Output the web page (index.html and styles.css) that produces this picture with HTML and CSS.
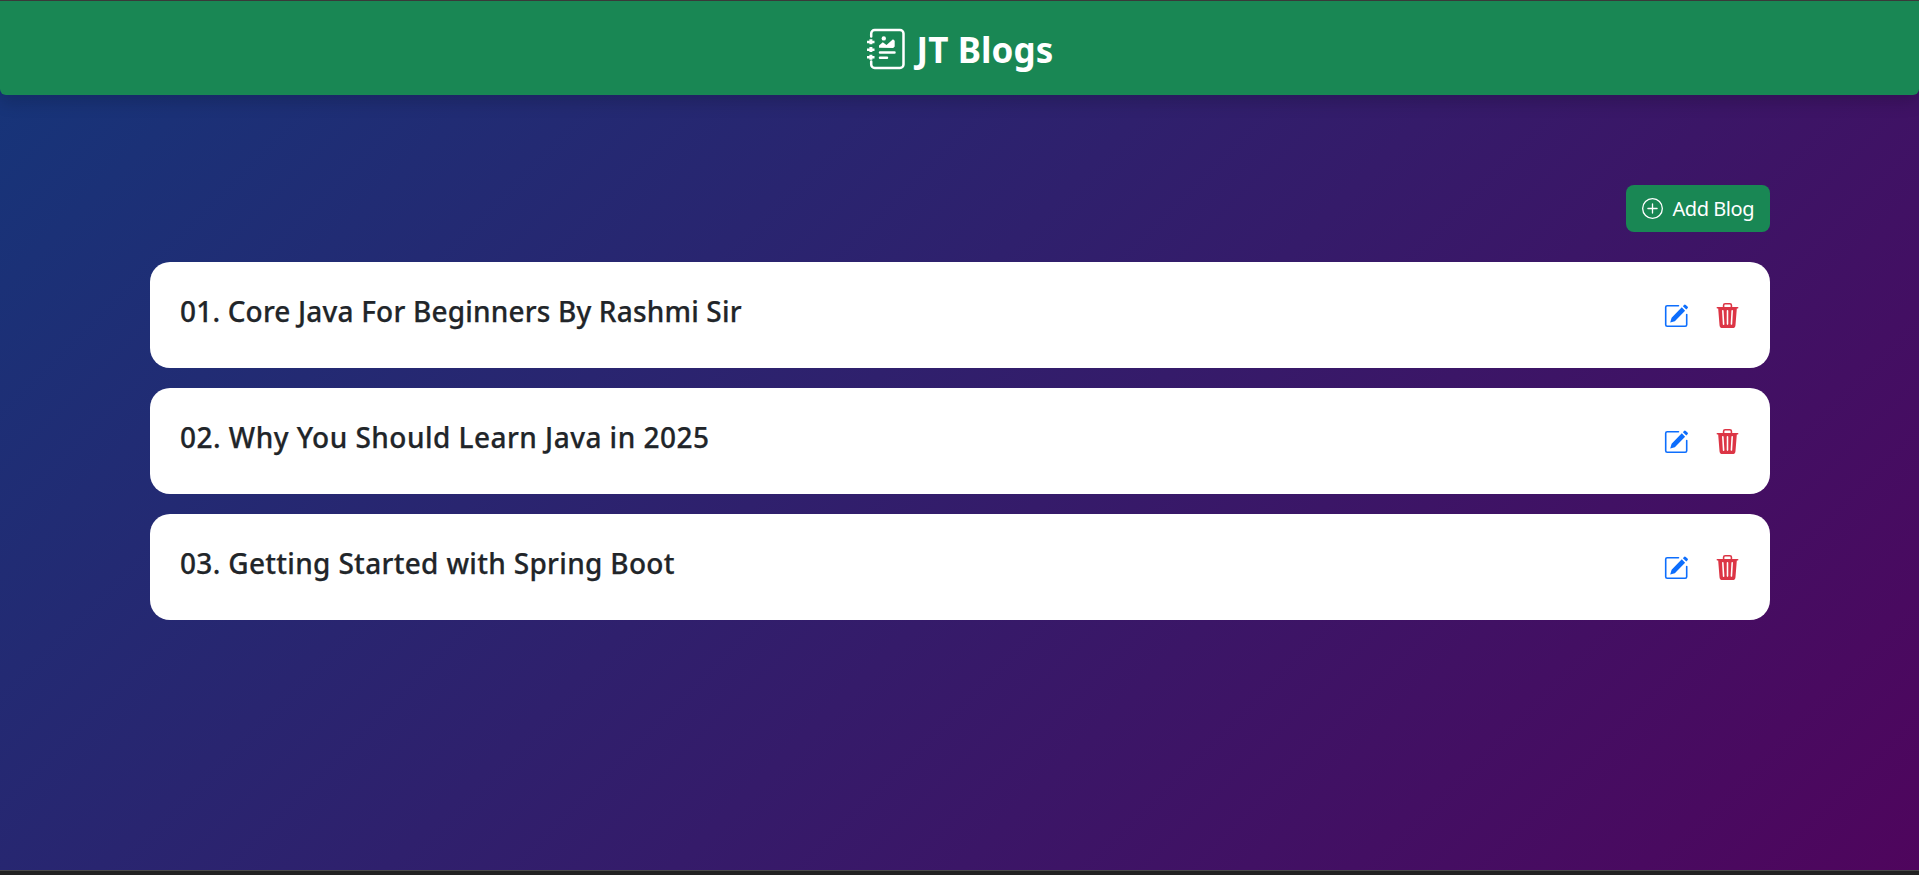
FILE: index.html
```
<!DOCTYPE html>
<html lang="en">
<head>
<meta charset="utf-8">
<title>JT Blogs</title>
<link rel="stylesheet" href="styles.css">
</head>
<body>
<svg class="sprite" aria-hidden="true">
  <symbol id="edit" viewBox="0 0 24 24">
    <path d="M14.500 1.700H3.200a1.500 1.500 0 0 0-1.500 1.500V20.800a1.500 1.500 0 0 0 1.500 1.500h18a1.500 1.500 0 0 0 1.500-1.500V10.500" fill="none" stroke="currentColor" stroke-width="1.600" stroke-linecap="round"/>
    <path d="M17.800 3.200l3.300 3.500L10.800 17.200 6.200 18.600l1.400-4.800zM18.900 2.200l1.100-1.300a1.300 1.300 0 0 1 1.800 0l1.700 1.600a1.300 1.300 0 0 1 0 1.800L22.300 5.600z" fill="currentColor"/>
  </symbol>
  <symbol id="trash" viewBox="0 0 16 16">
    <path fill="currentColor" d="M11 1.500v1h3.500a.5.5 0 0 1 0 1h-.538l-.853 10.660A2 2 0 0 1 11.115 16h-6.230a2 2 0 0 1-1.994-1.840L2.038 3.500H1.500a.5.5 0 0 1 0-1H5v-1A1.500 1.500 0 0 1 6.500 0h3A1.500 1.500 0 0 1 11 1.500m-5 0v1h4v-1a.5.5 0 0 0-.5-.5h-3a.5.5 0 0 0-.5.5M4.500 5.029l.5 8.500a.5.5 0 1 0 .998-.06l-.5-8.500a.5.5 0 1 0-.998.06m6.530-.528a.5.5 0 0 0-.528.47l-.5 8.500a.5.5 0 0 0 .998.058l.5-8.500a.5.5 0 0 0-.47-.528M8 4.500a.5.5 0 0 0-.5.5v8.500a.5.5 0 0 0 1 0V5a.5.5 0 0 0-.5-.5"/>
  </symbol>
</svg>
<div class="page">
  <header class="header">
    <svg class="logo" viewBox="0 0 40 42" fill="none" stroke="currentColor">
      <path d="M5.200 8.500V5.500a3.500 3.500 0 0 1 3.500-3.500h25.300a3.500 3.500 0 0 1 3.500 3.500v31a3.500 3.500 0 0 1-3.500 3.500H8.700a3.500 3.500 0 0 1-3.500-3.500v-3" stroke-width="2.500" stroke-linecap="round"/>
      <path d="M1 14h7.500M1 21.700h7.500M1 29.300h7.500" stroke-width="2.500"/>
      <path d="M4.900 11.300v5M4.900 19.100v5M4.900 26.700v5" stroke-width="3"/>
      <path d="M14 24.500h14.500M14 29.800h7" stroke-width="2.500" stroke-linecap="round"/>
      <circle cx="17.800" cy="10.400" r="2.200" fill="currentColor" stroke="none"/>
      <path d="M13 19.800v-2.300l3.800-3.300 3.700 2.700 6.500-5.600 1.700 1.400v5.700l-1.500 1.600z" fill="currentColor" stroke="none"/>
    </svg>
    <h1 class="brand">JT Blogs</h1>
  </header>
  <main class="content">
    <div class="toolbar">
      <button class="add">
        <svg class="add-icon" viewBox="0 0 16 16" fill="none" stroke="currentColor" stroke-linecap="round"><circle cx="8" cy="8" r="7.500"/><path d="M8 4.500v7M4.500 8h7"/></svg>
        <span class="add-label">Add Blog</span>
      </button>
    </div>
    <div class="list">
      <article class="card"><h3 class="title t1">01. Core Java For Beginners By Rashmi Sir</h3><div class="actions"><svg class="edit"><use href="#edit"/></svg><svg class="trash"><use href="#trash"/></svg></div></article>
      <article class="card"><h3 class="title t2">02. Why You Should Learn Java in 2025</h3><div class="actions"><svg class="edit"><use href="#edit"/></svg><svg class="trash"><use href="#trash"/></svg></div></article>
      <article class="card"><h3 class="title t3">03. Getting Started with Spring Boot</h3><div class="actions"><svg class="edit"><use href="#edit"/></svg><svg class="trash"><use href="#trash"/></svg></div></article>
    </div>
  </main>
  <div class="bottom-bar"></div>
</div>
</body>
</html>
```
FILE: styles.css
```
* { box-sizing: border-box; }
body {
  margin: 0;
  overflow: hidden;
  font-family: "Segoe UI", "Noto Sans", "Open Sans", sans-serif;
  color: #212529;
}
.sprite { display: none; }
.page {
  display: flex;
  flex-direction: column;
  height: 875px;
  border-top: 1px solid #3b3b3b;
  background: linear-gradient(135deg, #15367a, #4f055d);
}
.header {
  display: flex;
  align-items: center;
  justify-content: center;
  gap: 11px;
  height: 94px;
  flex: none;
  border-radius: 0 0 6px 6px;
  background: #198754;
  color: #fff;
  box-shadow: 0 8px 16px rgba(0, 0, 0, .15);
}
.logo { width: 40px; height: 42px; margin-top: 1px; }
.brand {
  margin: 0;
  padding-top: 4px;
  font-size: 35px;
  line-height: 48px;
  font-weight: 700;
  letter-spacing: .1px;
}
.content { flex: 1; padding: 90px 149px 0 150px; }
.toolbar { display: flex; justify-content: flex-end; }
.add {
  display: flex;
  align-items: center;
  gap: 10px;
  width: 144px;
  height: 47px;
  padding: 0 0 0 15.5px;
  border: 0;
  border-radius: 8px;
  background: #198754;
  color: #fff;
  font: 400 20px/28px "Segoe UI", "Noto Sans", sans-serif;
  letter-spacing: -.45px;
  white-space: nowrap;
}
.add-icon { width: 21px; height: 21px; flex: none; }
.list { display: flex; flex-direction: column; gap: 20px; margin-top: 30px; }
.card {
  display: flex;
  justify-content: space-between;
  align-items: flex-start;
  height: 106px;
  padding: 30px;
  border-radius: 20px;
  background: #fff;
}
.title {
  margin: 0;
  font-size: 28px;
  line-height: 38px;
  font-weight: 500;
  -webkit-text-stroke: .25px currentColor;
  white-space: nowrap;
}
.t1 { letter-spacing: .18px; }
.t2 { letter-spacing: .47px; }
.t3 { letter-spacing: .32px; }
.actions { display: flex; align-items: center; gap: 27px; margin: 11px 0 0; }
.edit { width: 24px; height: 24px; color: #0d6efd; }
.trash { width: 25px; height: 25px; color: #dc3545; }
.bottom-bar { height: 5px; flex: none; border-top: 1px solid #4a4a4a; background: #222; }
```
